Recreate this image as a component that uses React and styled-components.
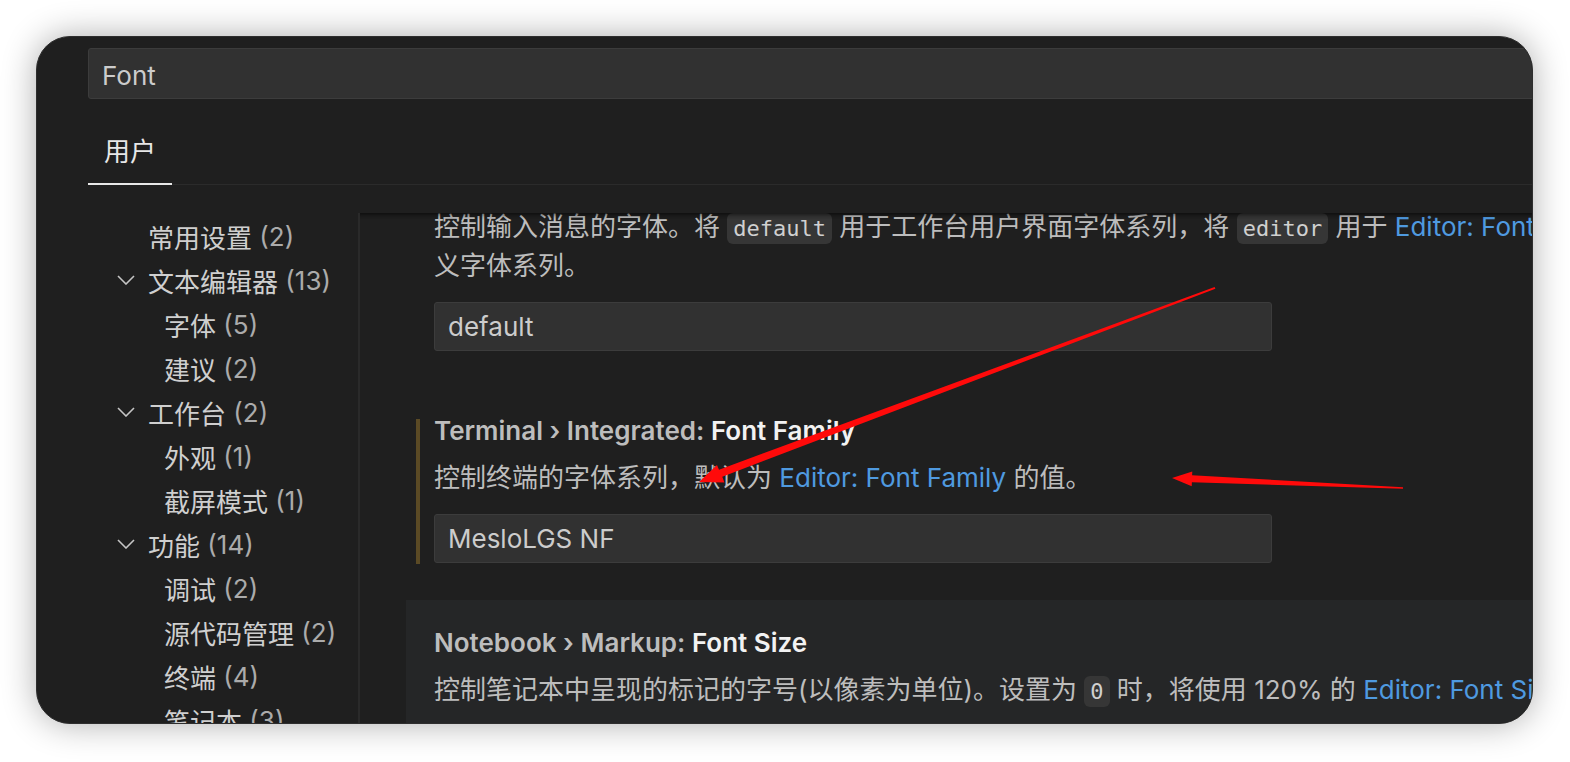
import React from 'react'
import styled, { createGlobalStyle } from 'styled-components'

const GlobalStyle = createGlobalStyle`
  html, body {
    margin: 0;
    background: #ffffff;
  }
  body {
    font-family: Inter, "Noto Sans CJK SC", sans-serif;
    overflow: hidden;
  }
`

const toc = [
  { label: '常用设置', count: 2, depth: 0 },
  { label: '文本编辑器', count: 13, depth: 0, open: true },
  { label: '字体', count: 5, depth: 1 },
  { label: '建议', count: 2, depth: 1 },
  { label: '工作台', count: 2, depth: 0, open: true },
  { label: '外观', count: 1, depth: 1 },
  { label: '截屏模式', count: 1, depth: 1 },
  { label: '功能', count: 14, depth: 0, open: true },
  { label: '调试', count: 2, depth: 1 },
  { label: '源代码管理', count: 2, depth: 1 },
  { label: '终端', count: 4, depth: 1 },
  { label: '笔记本', count: 3, depth: 1 },
]

function Chevron() {
  return (
    <svg width="18" height="10" viewBox="0 0 18 10">
      <polyline points="1,1 9,9 17,1" fill="none" stroke="#c5c5c5" strokeWidth="1.6" />
    </svg>
  )
}

// red annotation arrows drawn over the screenshot
function Arrows() {
  return (
    <Overlay viewBox="0 0 1570 762">
      <polygon
        fill="#ff0a0a"
        points="699,482 724.4,482.4 722.3,476.7 1215.4,288.7 1214.6,286.9 719,469.7 717,465"
      />
      <polygon
        fill="#ff0a0a"
        points="1172,478 1192.3,471.4 1192.1,475.3 1403,487.2 1403,488.8 1191.9,482.3 1191.7,486.2"
      />
    </Overlay>
  )
}

export default function App() {
  return (
    <Page>
      <GlobalStyle />
      <Window>
        <Header>
          <SearchBox>Font</SearchBox>
          <TabRow>
            <Tab>用户</Tab>
          </TabRow>
        </Header>
        <Body>
          <Sidebar>
            {toc.map((t) => (
              <TocRow key={t.label} $depth={t.depth}>
                <Twist>{t.open && <Chevron />}</Twist>
                <TocLabel>{t.label}</TocLabel>
                <TocCount>&nbsp;({t.count})</TocCount>
              </TocRow>
            ))}
          </Sidebar>
          <Panel>
            <List>
              <Item>
                <Title>
                  <Category>SCM › Input: </Category>
                  <Label>Font Family</Label>
                </Title>
                <Desc>
                  控制输入消息的字体。将 <Code>default</Code> 用于工作台用户界面字体系列，将{' '}
                  <Code>editor</Code> 用于 <Link>Editor: Font Family</Link> 的值，或使用自定
                  <br />
                  义字体系列。
                </Desc>
                <Field readOnly value="default" />
              </Item>
              <Item $modified>
                <Title>
                  <Category>Terminal › Integrated: </Category>
                  <Label>Font Family</Label>
                </Title>
                <Desc>
                  控制终端的字体系列，默认为 <Link>Editor: Font Family</Link> 的值。
                </Desc>
                <Field readOnly value="MesloLGS NF" />
              </Item>
              <Item $hover>
                <Title>
                  <Category>Notebook › Markup: </Category>
                  <Label>Font Size</Label>
                </Title>
                <Desc>
                  控制笔记本中呈现的标记的字号(以像素为单位)。设置为 <Code>0</Code> 时，将使用 120% 的{' '}
                  <Link>Editor: Font Size</Link>。
                </Desc>
                <Field readOnly value="0" />
              </Item>
            </List>
          </Panel>
        </Body>
      </Window>
      <Arrows />
    </Page>
  )
}

const Page = styled.div`
  position: relative;
  width: 1570px;
  height: 762px;
  box-sizing: border-box;
  padding: 36px 37px 38px 36px;
`

const Overlay = styled.svg`
  position: absolute;
  top: 0;
  left: 0;
  width: 1570px;
  height: 762px;
  pointer-events: none;
`

const Window = styled.div`
  width: 1497px;
  height: 688px;
  box-sizing: border-box;
  display: flex;
  flex-direction: column;
  background: #1f1f1f;
  border: 1px solid #2e2e2e;
  border-radius: 34px;
  overflow: hidden;
  box-shadow: 0 0 34px rgba(0, 0, 0, 0.32);
`

const Header = styled.div`
  padding: 11px 0 0 51px;
  flex: none;
`

const SearchBox = styled.div`
  height: 51px;
  box-sizing: border-box;
  margin-right: -40px;
  display: flex;
  align-items: center;
  padding: 3px 13px 0;
  background: #313131;
  border: 1px solid #3c3c3c;
  border-radius: 3px;
  color: #cccccc;
  font-size: 26px;
`

const TabRow = styled.div`
  margin-top: 24px;
  display: flex;
  border-bottom: 1px solid #2b2b2b;
`

const Tab = styled.div`
  height: 62px;
  box-sizing: border-box;
  display: flex;
  align-items: center;
  padding: 0 16px 8px;
  margin-bottom: -1px;
  border-bottom: 2px solid #e7e7e7;
  color: #e7e7e7;
  font-size: 26px;
`

const Body = styled.div`
  flex: 1;
  min-height: 0;
  margin-top: 28px;
  margin-left: 51px;
  display: flex;
`

const Sidebar = styled.div`
  flex: none;
  width: 272px;
  box-sizing: border-box;
  padding-top: 1px;
  border-right: 2px solid #2a2a2a;
`

const TocRow = styled.div`
  height: 44px;
  display: flex;
  align-items: center;
  padding-left: ${(p) => 29 + p.$depth * 16}px;
  font-size: 26px;
  white-space: nowrap;
`

const Twist = styled.span`
  width: 31px;
  flex: none;
  display: flex;
  align-items: center;
`

const TocLabel = styled.span`
  color: #cfcfcf;
`

const TocCount = styled.span`
  color: #ababab;
`

const Panel = styled.div`
  flex: 1;
  min-width: 0;
  position: relative;
  overflow: hidden;

  &::after {
    content: '';
    position: absolute;
    top: 0;
    left: 0;
    right: 0;
    height: 6px;
    box-shadow: #000000 0 6px 6px -6px inset;
  }
`

const List = styled.div`
  margin-top: -76px;
  margin-left: 46px;
  width: 1400px;
`

const Item = styled.div`
  position: relative;
  padding: 25px 28px 37px;
  background: ${(p) => (p.$hover ? '#252627' : 'transparent')};

  &::before {
    content: '';
    display: ${(p) => (p.$modified ? 'block' : 'none')};
    position: absolute;
    left: 10px;
    top: 31px;
    bottom: 36px;
    width: 4px;
    background: #5b4a25;
  }
`

const Title = styled.div`
  font-size: 26px;
  font-weight: 600;
  line-height: 36px;
  white-space: nowrap;
`

const Category = styled.span`
  color: #bdbdbd;
`

const Label = styled.span`
  color: #f2f2f2;
`

const Desc = styled.div`
  margin-top: 10px;
  font-size: 26px;
  line-height: 37px;
  color: #bdbdbd;
  white-space: nowrap;
`

const Link = styled.span`
  color: #4f9ae0;
`

const Code = styled.span`
  font-family: "DejaVu Sans Mono", monospace;
  font-size: 22px;
  color: #d0d0d0;
  background: #363636;
  border-radius: 6px;
  padding: 3px 6px;
`

const Field = styled.input`
  display: block;
  margin-top: 18px;
  width: 838px;
  height: 49px;
  box-sizing: border-box;
  padding: 0 13px;
  background: #313131;
  border: 1px solid #3c3c3c;
  border-radius: 3px;
  color: #cccccc;
  font-family: inherit;
  font-size: 26px;
  outline: none;
`
